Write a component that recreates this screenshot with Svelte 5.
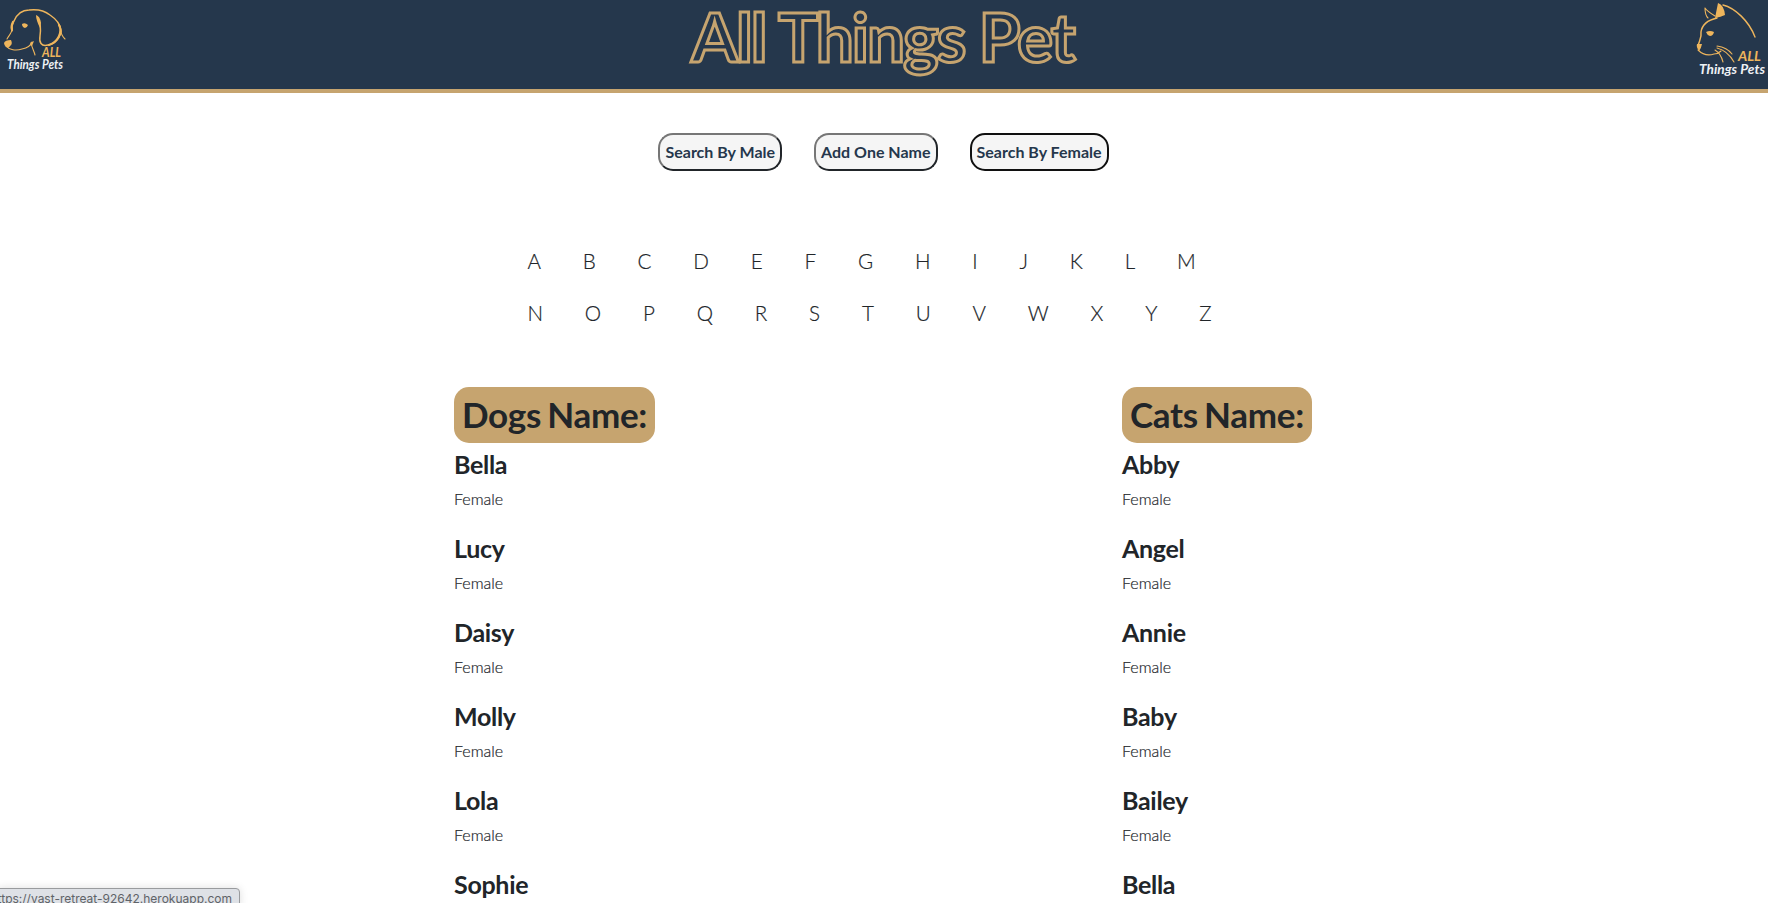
<script>
  const rows = ['ABCDEFGHIJKLM'.split(''), 'NOPQRSTUVWXYZ'.split('')];
  const dogs = ['Bella', 'Lucy', 'Daisy', 'Molly', 'Lola', 'Sophie'];
  const cats = ['Abby', 'Angel', 'Annie', 'Baby', 'Bailey', 'Bella'];
</script>

{#snippet list(title, names)}
  <section>
    <h2>{title}</h2>
    {#each names as name}
      <article>
        <h3>{name}</h3>
        <p>Female</p>
      </article>
    {/each}
  </section>
{/snippet}

<div class="page">
  <header>
    <svg class="logo" width="100" height="89" viewBox="0 0 100 89">
      <g fill="none" stroke="#eeb55c" stroke-linecap="round" stroke-linejoin="round">
        <path d="M12 31C11 27 12 24 14 21C17 14 22 10 29 10C37 9 45 11 50 15C56 19 60 24 61 30C61 37 55 44 48 45C41 47 39 42 40 36C41 29 40 22 38 18" stroke-width="1.5" />
        <path d="M12 30C11 27 12 24 13 22M59 25C63 32 58 42 49 45" stroke-width="2.2" />
        <path d="M12 29C12 33 9 35 7 39M6 46C9 50 16 51 22 49C27 48 31 45 32 42M31 43C32 48 34 51 35 55M61 31C61 34 63 37 65 39" stroke-width="1.1" />
      </g>
      <path d="M4 43Q5 40 11 40Q13 44 10 46Q9 49 6 47Q4 45 4 43ZM22 24Q25 22 28 25Q27 28 25 28Q22 27 22 24ZM36 15Q40 16 41 23L40 28Q36 20 36 15ZM30 43L34 41L32 46Z" fill="#eeb55c" />
      <text x="42" y="56.5" class="all" textLength="19" lengthAdjust="spacingAndGlyphs">ALL</text>
      <text x="7" y="68.5" class="things" textLength="56" lengthAdjust="spacingAndGlyphs">Things Pets</text>
    </svg>
    <h1>All Things Pet</h1>
    <svg class="logo" width="100" height="89" viewBox="0 0 100 89">
      <g fill="none" stroke="#eeb55c" stroke-linecap="round" stroke-linejoin="round">
        <path d="M49 18C40 20 34 25 33 32C34 38 31 41 30 46" stroke-width="1.5" />
        <path d="M30 50C34 54 40 56 46 54C49 54 51 53 53 51M47 16C42 13 39 11 37 8C37 12 38 16 40 18M47 50C52 53 54 58 55 62M49 48C57 50 62 55 66 62M49 46C56 47 61 50 64 54" stroke-width="1.1" />
        <path d="M55 5C67 8 81 21 87 37" stroke-width="1.4" />
      </g>
      <path d="M47 18L50 3Q56 5 57 15Q53 17 47 18ZM38 32Q42 30 46 32Q45 36 42 36Q39 35 38 32ZM29 44L34 44Q33 49 31 51Q28 47 29 44Z" fill="#eeb55c" />
      <text x="70" y="61" class="all" textLength="23" lengthAdjust="spacingAndGlyphs" style:font-size="14px">ALL</text>
      <text x="31" y="74" class="things" textLength="66" lengthAdjust="spacingAndGlyphs" style:font-size="13.5px">Things Pets</text>
    </svg>
  </header>

  <nav class="actions">
    <button>Search By Male</button>
    <button>Add One Name</button>
    <button class="active">Search By Female</button>
  </nav>

  <div class="letters">
    {#each rows as row}
      <div class="row">
        {#each row as letter}<span>{letter}</span>{/each}
      </div>
    {/each}
  </div>

  <main>
    {@render list('Dogs Name:', dogs)}
    {@render list('Cats Name:', cats)}
  </main>

  <div class="status"><span>https://vast-retreat-92642.herokuapp.com</span></div>
</div>

<style>
  .page {
    height: 903px;
    overflow: hidden;
    position: relative;
    background: #fff;
    color: #212529;
    font-family: Lato, sans-serif;
    font-weight: 300;
  }
  header {
    height: 93px;
    box-sizing: border-box;
    border-bottom: 4px solid #c6a46f;
    background: #25374c;
    display: flex;
    justify-content: space-between;
  }
  h1 {
    margin: 0;
    padding-right: 3px;
    font-size: 67.5px;
    line-height: 72px;
    letter-spacing: -2px;
    font-weight: 700;
    color: #25374c;
    -webkit-text-stroke: 3px #c6a46f;
    white-space: nowrap;
  }
  .all { font: italic 700 13px Lato, sans-serif; fill: #eeb55c; }
  .things { font: italic 700 12.5px Lato, sans-serif; fill: #eef1f4; }
  .actions {
    display: flex;
    justify-content: center;
    gap: 32px;
    padding: 40px 1px 0 0;
  }
  button {
    height: 38px;
    box-sizing: border-box;
    padding: 0 5px 2px;
    border: 2px solid;
    border-color: #767676 #212529 #212529 #767676;
    border-radius: 15px;
    background: #f5f5f5;
    color: #25374c;
    font: 700 16px Lato, sans-serif;
  }
  button.active { border-color: #101010; }
  .letters { padding: 64px 0 0 527.5px; }
  .row {
    height: 52px;
    line-height: 52px;
    display: flex;
    gap: 41.8px;
    font-size: 20.6px;
    -webkit-text-stroke: .2px #212529;
  }
  main {
    display: grid;
    grid-template-columns: 668px 1fr;
    padding: 48px 0 0 454px;
  }
  h2 {
    width: max-content;
    margin: 0;
    padding: 7px 8px 9px;
    border-radius: 15px;
    background: #c6a46f;
    font-size: 35px;
    line-height: 40px;
    letter-spacing: -.3px;
    word-spacing: -2px;
    font-weight: 700;
  }
  article { height: 84px; }
  h3 {
    margin: 0;
    padding-top: 6px;
    font-size: 25px;
    line-height: 30px;
    letter-spacing: -.3px;
    font-weight: 700;
  }
  p {
    margin: 8px 0 0;
    font-size: 16px;
    line-height: 24px;
    -webkit-text-stroke: .2px #212529;
  }
  .status {
    position: absolute;
    left: -2px;
    bottom: -5px;
    width: 240px;
    height: 18px;
    border: 1px solid #999b9e;
    border-radius: 0 4px 0 0;
    background: #dee1e6;
    box-shadow: 0 0 8px #0002;
    color: #5f6368;
    font: 400 12px/20px Inter, sans-serif;
    white-space: nowrap;
    display: flex;
    justify-content: flex-end;
  }
  .status span { padding-right: 7px; }
</style>
